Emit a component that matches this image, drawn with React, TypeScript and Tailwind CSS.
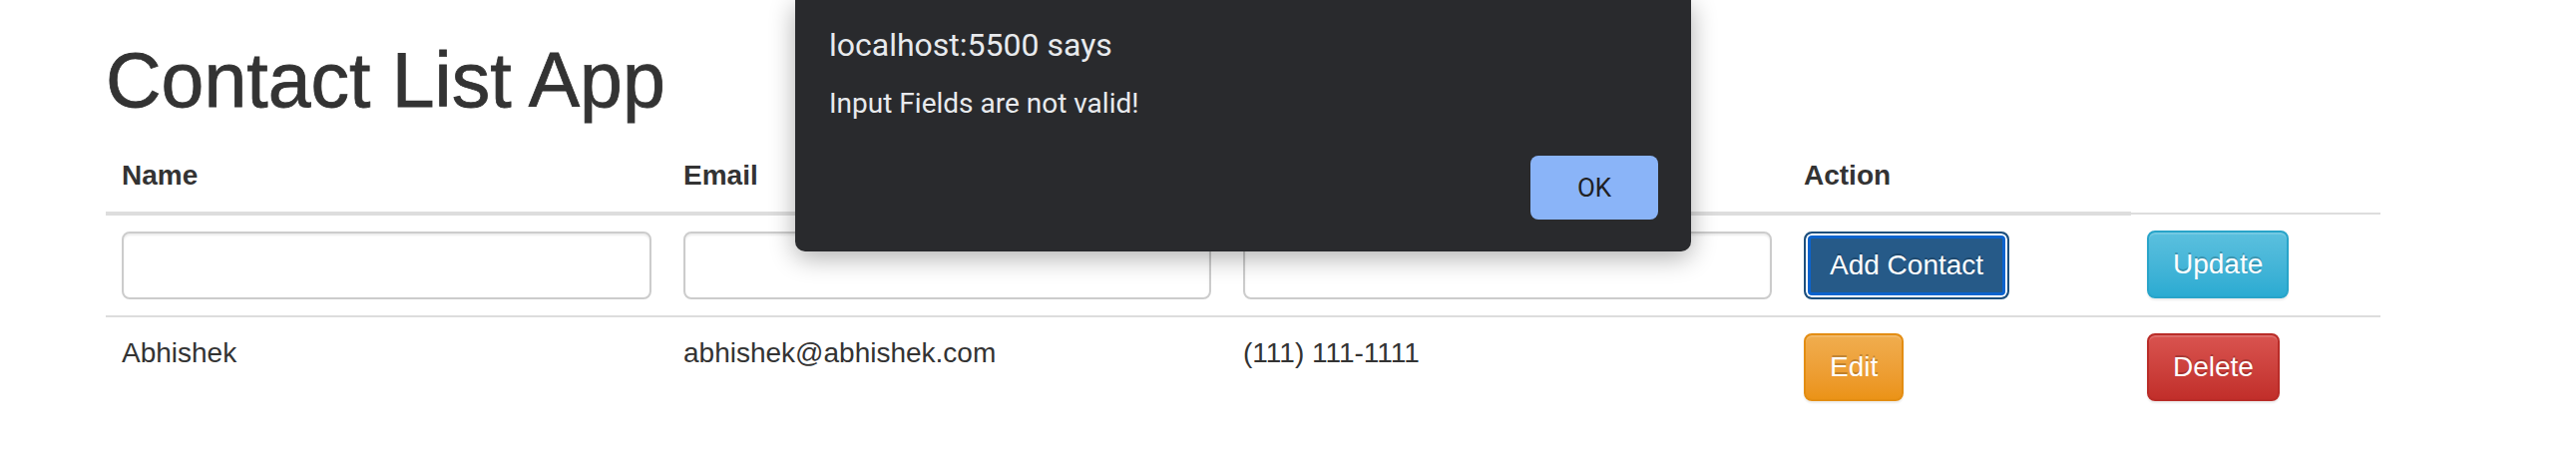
import React from 'react';

const inputCls =
  'block w-full h-[68px] px-[24px] bg-white border-2 border-[#ccc] rounded-[8px] shadow-[inset_0_2px_2px_rgba(0,0,0,0.075)] outline-none';

const btnBase =
  'inline-block px-[24px] py-[12px] text-[28px] leading-[40px] text-white rounded-[8px] border-2 whitespace-nowrap [text-shadow:0_-2px_0_rgba(0,0,0,0.2)]';

function ContactTable() {
  return (
    <table className="w-[2280px] table-fixed border-collapse text-[28px] leading-[40px]">
      <colgroup>
        <col className="w-[563px]" />
        <col className="w-[561px]" />
        <col className="w-[562px]" />
        <col className="w-[344px]" />
        <col className="w-[250px]" />
      </colgroup>
      <thead>
        <tr>
          {['Name', 'Email', 'Phone', 'Action'].map((h) => (
            <th key={h} className="p-[16px] text-left align-bottom font-bold border-b-4 border-[#ddd]">
              {h}
            </th>
          ))}
        </tr>
      </thead>
      <tbody>
        {/* Input row */}
        <tr>
          <td className="p-[16px] align-top border-t-2 border-[#ddd]">
            <input type="text" className={inputCls} />
          </td>
          <td className="p-[16px] align-top border-t-2 border-[#ddd]">
            <input type="text" className={inputCls} />
          </td>
          <td className="p-[16px] align-top border-t-2 border-[#ddd]">
            <input type="text" className={inputCls} />
          </td>
          <td className="p-[16px] align-top border-t-2 border-[#ddd]">
            <button className={`${btnBase} bg-[#265a88] border-[#1d4f7d] shadow-[inset_0_0_0_2px_#fff,inset_0_0_0_5px_#0b63ce]`}>
              Add Contact
            </button>
          </td>
          <td className="p-[16px] align-top border-t-2 border-[#ddd]">
            <button className={`${btnBase} bg-linear-to-b from-[#5bc0de] to-[#2aabd2] border-[#28a4c9] shadow-[inset_0_2px_0_rgba(255,255,255,0.15),0_2px_2px_rgba(0,0,0,0.075)]`}>
              Update
            </button>
          </td>
        </tr>

        {/* Contact row */}
        <tr>
          <td className="p-[16px] align-top border-t-2 border-[#ddd]">Abhishek</td>
          <td className="p-[16px] align-top border-t-2 border-[#ddd]">abhishek@abhishek.com</td>
          <td className="p-[16px] align-top border-t-2 border-[#ddd]">(111) 111-1111</td>
          <td className="p-[16px] align-top border-t-2 border-[#ddd]">
            <button className={`${btnBase} bg-linear-to-b from-[#f0ad4e] to-[#eb9316] border-[#e38d13] shadow-[inset_0_2px_0_rgba(255,255,255,0.15),0_2px_2px_rgba(0,0,0,0.075)]`}>
              Edit
            </button>
          </td>
          <td className="p-[16px] align-top border-t-2 border-[#ddd]">
            <button className={`${btnBase} bg-linear-to-b from-[#d9534f] to-[#c12e2a] border-[#b92c28] shadow-[inset_0_2px_0_rgba(255,255,255,0.15),0_2px_2px_rgba(0,0,0,0.075)]`}>
              Delete
            </button>
          </td>
        </tr>
      </tbody>
    </table>
  );
}

function AlertDialog() {
  return (
    <div className="absolute left-[797px] top-0 w-[898px] h-[252px] flex flex-col bg-[#292a2d] rounded-b-[10px] shadow-[0_6px_26px_rgba(0,0,0,0.32)] font-['Roboto',sans-serif] pl-[34px] pr-[33px] pt-[26px] pb-[32px]">
      <div className="text-[32px] leading-[38px] text-[#e8eaed]">localhost:5500 says</div>
      <div className="mt-[24px] text-[28px] leading-[32px] text-[#e8eaed]">Input Fields are not valid!</div>
      <div className="mt-auto flex justify-end">
        <button className="w-[128px] h-[64px] rounded-[8px] bg-[#8ab4f8] text-[#202124] text-[26px] font-normal">
          OK
        </button>
      </div>
    </div>
  );
}

export default function App() {
  return (
    <div className="relative h-[472px] overflow-hidden bg-white text-[#333] font-['Liberation_Sans',Arial,sans-serif]">
      <div className="px-[106px]">
        <h1 className="mt-[40px] mb-[20px] text-[77px] leading-[80px] font-normal [-webkit-text-stroke:0.8px_#333]">
          Contact List App
        </h1>
        <ContactTable />
      </div>
      <AlertDialog />
    </div>
  );
}
